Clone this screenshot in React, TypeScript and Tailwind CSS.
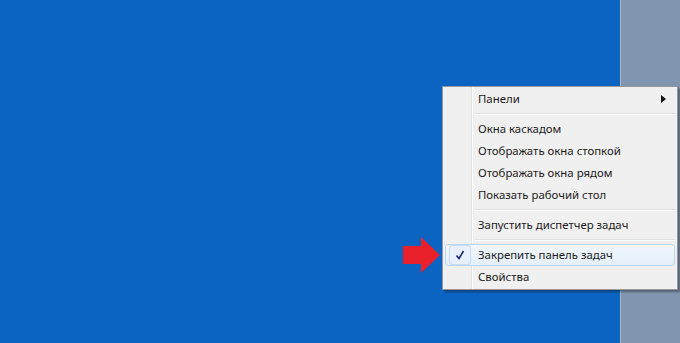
const items: ({ type: 'item'; label: string; sub?: boolean; checked?: boolean } | { type: 'sep' })[] = [
  { type: 'item', label: 'Панели', sub: true },
  { type: 'sep' },
  { type: 'item', label: 'Окна каскадом' },
  { type: 'item', label: 'Отображать окна стопкой' },
  { type: 'item', label: 'Отображать окна рядом' },
  { type: 'item', label: 'Показать рабочий стол' },
  { type: 'sep' },
  { type: 'item', label: 'Запустить диспетчер задач' },
  { type: 'sep' },
  { type: 'item', label: 'Закрепить панель задач', checked: true },
  { type: 'item', label: 'Свойства' },
];

const App = () => {
  return (
    <div className="relative flex h-[343px] w-[680px] overflow-hidden font-['Noto_Sans',sans-serif]">
      <div className="flex-1 bg-[#0b64c1]" />
      <div className="w-[60px] border-l border-[#a9b8cc] bg-[#8195ae]" />

      {/* red arrow */}
      <svg className="absolute left-[403px] top-[237px]" width="38" height="36" viewBox="0 0 38 36">
        <path d="M0 9 H18 V0 L37 18 L18 36 V27 H0 Z" fill="#e8202a" />
      </svg>

      {/* context menu */}
      <div className="absolute left-[442px] top-[86px] w-[236px] border border-[#979797] bg-[#f1f0f0] py-[1px] pl-[2px] pr-[2px] shadow-[2px_2px_2px_rgba(0,0,0,0.35)]">
        <div className="absolute bottom-0 left-[28px] top-0 w-[2px] border-l border-[#e2e3e3] bg-[#f1f0f0] border-r border-r-white" />
        {items.map((it, i) =>
          it.type === 'sep' ? (
            <div key={i} className="relative flex h-[8px] items-start pl-[30px] pt-[3px]">
              <div className="h-[2px] w-full border-t border-[#e0e0e0] border-b border-b-white" />
            </div>
          ) : (
            <div
              key={i}
              className={
                'relative flex h-[22px] items-center rounded-[3px] text-[11.4px] text-[#1a1a1a] ' +
                (it.checked ? 'border border-[#b8d6f3] bg-gradient-to-b from-[#f2f7fd] to-[#e4effb]' : 'border border-transparent')
              }
            >
              <div className="flex h-full w-[28px] items-center justify-center">
                {it.checked && (
                  <div className="flex h-[20px] w-[22px] items-center justify-center rounded-[3px] border border-[#c6dcf3] bg-[#e8f1fb]">
                    <svg width="10" height="10" viewBox="0 0 10 10">
                      <path d="M1.5 5.5 L4 8.5 L8.5 1" stroke="#1c2a6e" strokeWidth="1.6" fill="none" />
                    </svg>
                  </div>
                )}
              </div>
              <span className="ml-[4px] flex-1 leading-none">{it.label}</span>
              {it.sub && (
                <svg className="mr-[8px]" width="5" height="8" viewBox="0 0 5 8">
                  <path d="M0 0 L5 4 L0 8 Z" fill="#111" />
                </svg>
              )}
            </div>
          )
        )}
      </div>
    </div>
  );
};

export default App;
